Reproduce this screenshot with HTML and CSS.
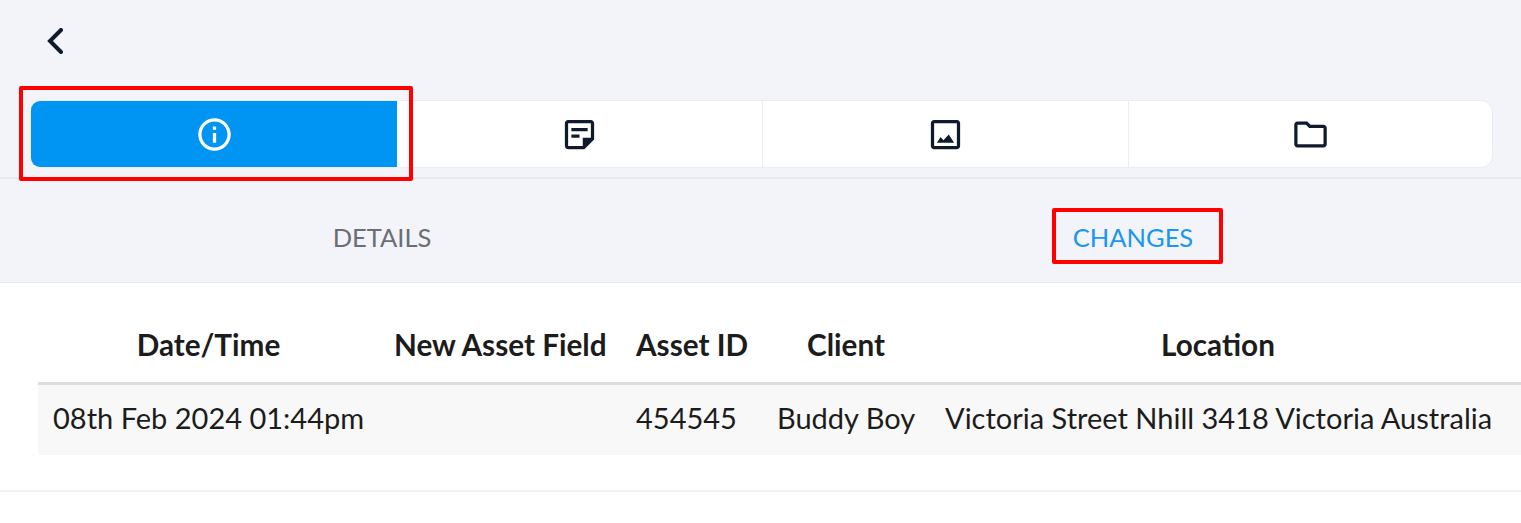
FILE: index.html
```html
<!DOCTYPE html>
<html lang="en">
<head>
<meta charset="utf-8">
<title>Asset changes</title>
<link rel="stylesheet" href="styles.css">
</head>
<body>
<header class="topbar">
  <button class="back" aria-label="Back">
    <svg class="back-icon" viewBox="0 0 16 26"><polyline points="14,2 3,13 14,24"/></svg>
  </button>
</header>
<section class="segments-wrap">
  <nav class="segments">
    <div class="segment active">
      <svg class="icon" viewBox="0 0 24 24"><path d="M11 7h2v2h-2zm0 4h2v6h-2zm1-9C6.48 2 2 6.48 2 12s4.48 10 10 10 10-4.48 10-10S17.52 2 12 2zm0 18c-4.41 0-8-3.59-8-8s3.59-8 8-8 8 3.59 8 8-3.59 8-8 8z"/></svg>
    </div>
    <div class="segment">
      <svg class="icon" viewBox="0 0 24 24"><path d="M19 3H5c-1.1 0-2 .9-2 2v14c0 1.1.9 2 2 2h10l6-6V5c0-1.1-.9-2-2-2zM5 19V5h14v9h-5v5H5zm2-11h10v2H7zm0 4h5v2H7z"/></svg>
    </div>
    <div class="segment">
      <svg class="icon" viewBox="0 0 24 24"><path d="M19 3H5c-1.100 0-2 .9-2 2v14c0 1.100.9 2 2 2h14c1.100 0 2-.9 2-2V5c0-1.100-.9-2-2-2zm0 16H5V5h14v14z"/><path d="M6.700 17l2.300-3.400 1.700 2L14 12l3.300 5z"/></svg>
    </div>
    <div class="segment">
      <svg class="icon" viewBox="0 0 24 24"><path d="M20 6h-8l-2-2H4c-1.100 0-2 .9-2 2v12c0 1.100.9 2 2 2h16c1.100 0 2-.9 2-2V8c0-1.100-.9-2-2-2zm0 12H4V6h5.170l2 2H20v10z"/></svg>
    </div>
  </nav>
  <div class="highlight highlight-segment"></div>
</section>
<section class="tabs">
  <div class="tab">DETAILS</div>
  <div class="tab tab-active">CHANGES</div>
  <div class="highlight highlight-tab"></div>
</section>
<main class="content">
  <div class="table">
    <div class="row head">
      <div class="cell center">Date/Time</div>
      <div class="cell center">New Asset Field</div>
      <div class="cell center">Asset ID</div>
      <div class="cell center">Client</div>
      <div class="cell center">Location</div>
    </div>
    <div class="row body">
      <div class="cell">08th Feb 2024 01:44pm</div>
      <div class="cell"></div>
      <div class="cell">454545</div>
      <div class="cell">Buddy Boy</div>
      <div class="cell">Victoria Street Nhill 3418 Victoria Australia</div>
    </div>
  </div>
  <div class="rule"></div>
</main>
</body>
</html>
```
FILE: styles.css
```css
* { box-sizing: border-box; }
html, body { margin: 0; height: 100%; overflow: hidden; }
body {
  background: #f3f4f9;
  font-family: "Lato", "Liberation Sans", sans-serif;
  color: #1c1c1c;
}
.topbar { height: 100px; padding: 28px 0 0 47px; }
.back { display: block; padding: 0; border: 0; background: none; width: 16px; height: 26px; }
.back-icon { display: block; width: 16px; height: 26px; fill: none; stroke: #0f1b2d; stroke-width: 4; stroke-linecap: round; stroke-linejoin: miter; }
.segments-wrap { position: relative; height: 79px; padding: 0 28px 0 30px; border-bottom: 2px solid #e9eaf0; }
.segments {
  display: grid;
  grid-template-columns: 366px 366px 366px 1fr;
  height: 68px;
  background: #fff;
  border: 1px solid #eaecf2;
  border-radius: 12px;
}
.segment { display: flex; align-items: center; justify-content: center; border-right: 1px solid #eceef3; }
.segment:last-child { border-right: 0; }
.segment.active { background: #0095f3; border-radius: 9px 0 0 9px; border-right: 0; }
.icon { display: block; width: 39px; height: 39px; fill: #0f1b2d; }
.active .icon { fill: #fff; }
.highlight { position: absolute; border: 4px solid #fe0000; border-radius: 2px; pointer-events: none; }
.highlight-segment { left: 19px; top: -14px; width: 394px; height: 95px; }
.highlight-tab { left: 1052px; top: 29px; width: 171px; height: 56px; }
.tabs {
  position: relative;
  display: grid;
  grid-template-columns: 764px 738px;
  height: 104px;
  border-bottom: 1px solid #e9eaf0;
}
.tab { display: flex; align-items: center; justify-content: center; font-size: 25.5px; color: #6b6e73; padding-top: 12px; }
.tab-active { color: #1a96f3; }
.content { background: #fff; height: 240px; padding-left: 38px; }
.table { padding-top: 27px; }
.row { display: grid; grid-template-columns: 341px 242px 141px 168px 576px; }
.head { height: 75px; border-bottom: 3px solid #dddddd; font-size: 29.7px; font-weight: 700; }
.head .cell { padding-top: 17px; }
.body { height: 70px; padding-bottom: 5px; background: #f8f8f8; font-size: 29px; align-items: center; }
.cell { padding: 0 15px; white-space: nowrap; }
.center { text-align: center; }
.rule { height: 2px; background: #f1f1f1; margin: 35px 0 0 -38px; }
```
